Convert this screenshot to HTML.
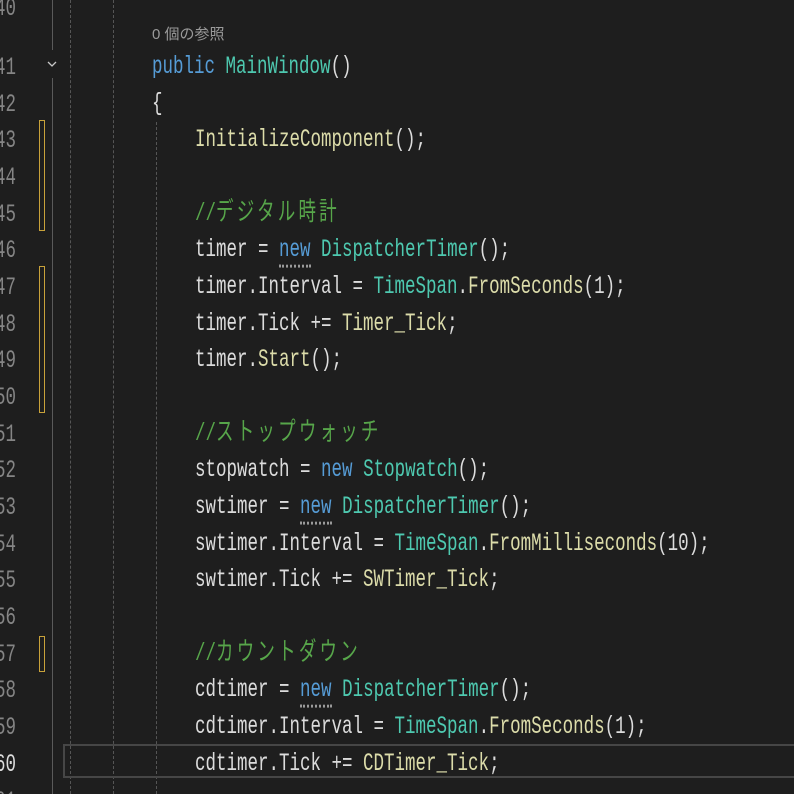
<!DOCTYPE html>
<html><head><meta charset="utf-8"><style>
html,body{margin:0;padding:0;background:#1e1e1e;width:794px;height:794px;overflow:hidden;position:relative}
.l{position:absolute;height:36px;line-height:36px;white-space:pre;font-family:"Liberation Mono","Noto Sans CJK JP",monospace;font-size:17.5px;color:#dcdcdc}
.l>span.s{display:inline-block;transform:translateY(3px) scaleY(1.45);transform-origin:50% 55%}
.n{position:absolute;right:778px;text-align:right;color:#858585;height:36px;line-height:36px;font-family:"Liberation Mono",monospace;font-size:17.5px}
.n span{display:inline-block;transform:translateY(3px) scaleY(1.45)}
.k{color:#569cd6}.t{color:#4ec9b0}.m{color:#dcdcaa}.c{color:#57a64a}
.j{letter-spacing:3.2px}
.sq{border-bottom:2px dotted #9a9a9a}
.v{position:absolute;width:0}
.mk{position:absolute;left:39px;width:4px;border:1px solid #c8a23a}
</style></head><body>
<div class="v" style="left:52px;top:0;height:50px;border-left:1px solid #5a5a5a"></div>
<div class="v" style="left:52px;top:78px;height:716px;border-left:1px solid #5a5a5a"></div>
<div class="v" style="left:70px;top:0;height:794px;border-left:1px dashed #555"></div>
<div class="v" style="left:113px;top:0;height:794px;border-left:1px dashed #555"></div>
<div class="v" style="left:156px;top:122px;height:672px;border-left:1px dashed #555"></div>
<svg style="position:absolute;left:47px;top:60px" width="10" height="8"><path d="M1 2 L5 6 L9 2" stroke="#c8c8c8" stroke-width="1.3" fill="none"/></svg>
<div class="mk" style="top:120px;height:109px"></div>
<div class="mk" style="top:266px;height:145px"></div>
<div class="mk" style="top:636px;height:34px"></div>
<div style="position:absolute;left:63px;top:744px;width:740px;height:34px;border:2px solid #464646;box-sizing:border-box"></div>
<div style="position:absolute;left:152px;top:23px;color:#9a9a9a;font:15px 'Liberation Sans','Noto Sans CJK JP',sans-serif">0 個の参照</div>

<div class="n" style="top:-12px"><span>40</span></div>
<div class="n" style="top:47px"><span>41</span></div>
<div class="n" style="top:84px"><span>42</span></div>
<div class="n" style="top:120px"><span>43</span></div>
<div class="n" style="top:157px"><span>44</span></div>
<div class="n" style="top:194px"><span>45</span></div>
<div class="n" style="top:230px"><span>46</span></div>
<div class="n" style="top:267px"><span>47</span></div>
<div class="n" style="top:304px"><span>48</span></div>
<div class="n" style="top:340px"><span>49</span></div>
<div class="n" style="top:377px"><span>50</span></div>
<div class="n" style="top:414px"><span>51</span></div>
<div class="n" style="top:450px"><span>52</span></div>
<div class="n" style="top:487px"><span>53</span></div>
<div class="n" style="top:524px"><span>54</span></div>
<div class="n" style="top:560px"><span>55</span></div>
<div class="n" style="top:597px"><span>56</span></div>
<div class="n" style="top:634px"><span>57</span></div>
<div class="n" style="top:670px"><span>58</span></div>
<div class="n" style="top:707px"><span>59</span></div>
<div class="n" style="top:744px;color:#dcdcdc"><span>60</span></div>
<div class="n" style="top:781px"><span>61</span></div>

<div class="l" style="left:152px;top:47px"><span class="s"><span class="k">public</span> <span class="t">MainWindow</span>()</span></div>
<div class="l" style="left:152px;top:84px"><span class="s">{</span></div>
<div class="l" style="left:195px;top:120px"><span class="s"><span class="m">InitializeComponent</span>();</span></div>
<div class="l" style="left:195px;top:194px"><span class="s c">//<span class="j">デジタル時計</span></span></div>
<div class="l" style="left:195px;top:230px"><span class="s">timer = <span class="k sq">new</span> <span class="t">DispatcherTimer</span>();</span></div>
<div class="l" style="left:195px;top:267px"><span class="s">timer.Interval = <span class="t">TimeSpan</span>.<span class="m">FromSeconds</span>(1);</span></div>
<div class="l" style="left:195px;top:304px"><span class="s">timer.Tick += <span class="m">Timer_Tick</span>;</span></div>
<div class="l" style="left:195px;top:340px"><span class="s">timer.<span class="m">Start</span>();</span></div>
<div class="l" style="left:195px;top:414px"><span class="s c">//<span class="j">ストップウォッチ</span></span></div>
<div class="l" style="left:195px;top:450px"><span class="s">stopwatch = <span class="k">new</span> <span class="t">Stopwatch</span>();</span></div>
<div class="l" style="left:195px;top:487px"><span class="s">swtimer = <span class="k sq">new</span> <span class="t">DispatcherTimer</span>();</span></div>
<div class="l" style="left:195px;top:524px"><span class="s">swtimer.Interval = <span class="t">TimeSpan</span>.<span class="m">FromMilliseconds</span>(10);</span></div>
<div class="l" style="left:195px;top:560px"><span class="s">swtimer.Tick += <span class="m">SWTimer_Tick</span>;</span></div>
<div class="l" style="left:195px;top:634px"><span class="s c">//<span class="j">カウントダウン</span></span></div>
<div class="l" style="left:195px;top:670px"><span class="s">cdtimer = <span class="k sq">new</span> <span class="t">DispatcherTimer</span>();</span></div>
<div class="l" style="left:195px;top:707px"><span class="s">cdtimer.Interval = <span class="t">TimeSpan</span>.<span class="m">FromSeconds</span>(1);</span></div>
<div class="l" style="left:195px;top:744px"><span class="s">cdtimer.Tick += <span class="m">CDTimer_Tick</span>;</span></div>
</body></html>
